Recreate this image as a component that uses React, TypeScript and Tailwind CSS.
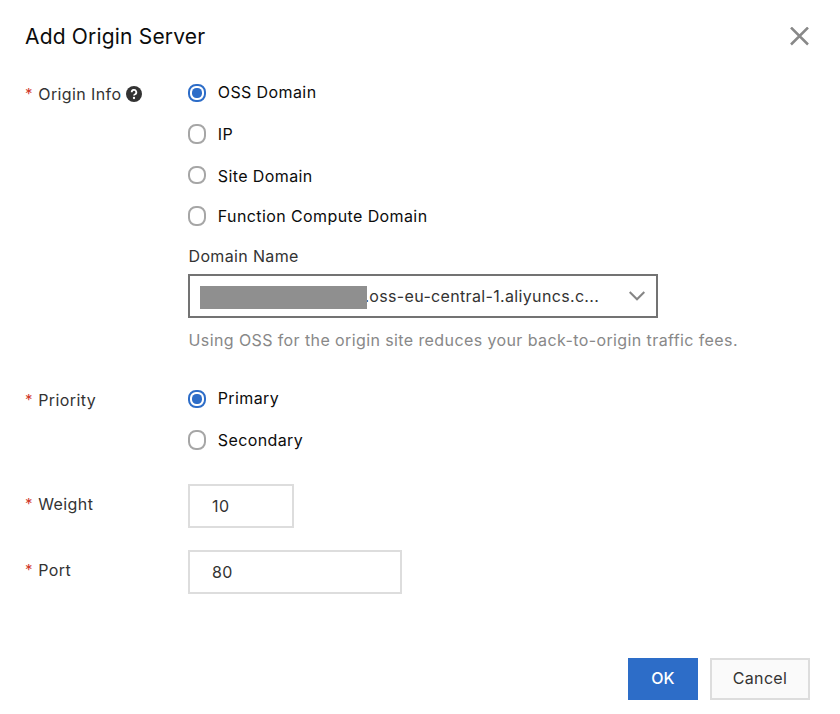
import React from "react";

function Label({ children, className = "" }: { children: React.ReactNode; className?: string }) {
  return (
    <div className={`flex w-[163px] shrink-0 items-center text-[#333] ${className}`}>
      <span className="w-[13.25px] text-[15px] text-[#d0392b]">*</span>
      {children}
    </div>
  );
}

function Radio({ label, checked, className, dot = "h-[18px]" }: { label: string; checked?: boolean; className: string; dot?: string }) {
  return (
    <div className={`flex items-center gap-[11.75px] text-[#0c0c0c] ${className}`}>
      {checked ? (
        <span className="mt-[2px] flex size-[18px] items-center justify-center rounded-[8px] border-2 border-[#2d6dc8] bg-white">
          <span className="size-[10px] rounded-[4.5px] bg-[#2d6dc8]" />
        </span>
      ) : (
        <span className={`w-[18px] rounded-[8px] border-2 border-[#a6a6a6] bg-white ${dot}`} />
      )}
      <span>{label}</span>
    </div>
  );
}

export default function App() {
  return (
    <div className="flex h-[714px] w-[840px] flex-col bg-white pl-[25px] pr-[30px] font-['Inter',sans-serif] text-[16px] leading-[20px] tracking-[0.4px] text-[#333]">
      <header className="flex h-[72px] items-center justify-between">
        <h1 className="mt-[2px] text-[21px] tracking-[0.18px] text-[#0c0c0c]">Add Origin Server</h1>
        <svg className="mr-px" width="19" height="19" viewBox="0 0 19 19" stroke="#888" strokeWidth="2.5"><path d="M1 .5L18 17.5M18 .5L1 17.5" /></svg>
      </header>
      <div className="flex h-[306px]">
        <Label className="mt-[12px] h-5">
          Origin Info
          <svg className="ml-[4.3px]" width="16" height="16" viewBox="0 0 16 16"><circle cx="8" cy="8" r="8" fill="#333" /><path d="M5.7 6.2a2.3 2.3 0 1 1 3.4 2C8.3 8.6 8 8.8 8 9.5" fill="none" stroke="#fff" strokeWidth="1.8" /><circle cx="8" cy="12" r="1.15" fill="#fff" /></svg>
        </Label>
        <div>
          <Radio label="OSS Domain" checked className="mt-[10px] h-5" />
          <Radio label="IP" dot="h-[20px]" className="mt-[22px] h-5" />
          <Radio label="Site Domain" dot="mb-[2px] h-[18px]" className="mt-[22px] h-5" />
          <Radio label="Function Compute Domain" dot="h-[20px]" className="mt-[20px] h-5" />
          <div className="mt-[20px] pl-[0.5px] tracking-[0.35px]">Domain Name</div>
          <div className="mt-[8px] flex h-[44px] w-[470px] items-center border-2 border-[#737373] pl-[10.4px] pr-[11px]">
            <span className="z-10 mt-[3px] h-[23px] w-[167px] bg-[#8f8f8f]" />
            <span className="-ml-[3px] flex-1 tracking-[0.34px]">.oss-eu-central-1.aliyuncs.c...</span>
            <svg width="16" height="10" viewBox="0 0 16 10" fill="none" stroke="#858585" strokeWidth="2"><path d="M.7 1L8 8.3 15.3 1" /></svg>
          </div>
          <div className="mt-[12px] pl-[0.5px] text-[#888]">Using OSS for the origin site reduces your back-to-origin traffic fees.</div>
        </div>
      </div>
      <div className="flex h-[106px]">
        <Label className="mt-[12px] h-5">Priority</Label>
        <div>
          <Radio label="Primary" checked className="mt-[10px] h-5" />
          <Radio label="Secondary" dot="h-[20px]" className="mt-[22px] h-5" />
        </div>
      </div>
      <div className="flex h-[66px]">
        <Label className="mt-[10px] h-5">Weight</Label>
        <div className="flex h-[44px] w-[106px] items-center border-2 border-[#ddd] pl-[22px]">10</div>
      </div>
      <div className="flex h-[108px]">
        <Label className="mt-[10px] h-5">Port</Label>
        <div className="flex h-[44px] w-[214px] items-center border-2 border-[#ddd] pl-[22px]">80</div>
      </div>
      <footer className="flex justify-end gap-[12px]">
        <button className="h-[42px] w-[70px] bg-[#2d6dc8] pb-[2px] font-medium tracking-[0.2px] text-white">OK</button>
        <button className="h-[42px] w-[100px] border-2 border-[#ddd] bg-[#fafafa] pb-[2px] tracking-[0.35px]">Cancel</button>
      </footer>
    </div>
  );
}
